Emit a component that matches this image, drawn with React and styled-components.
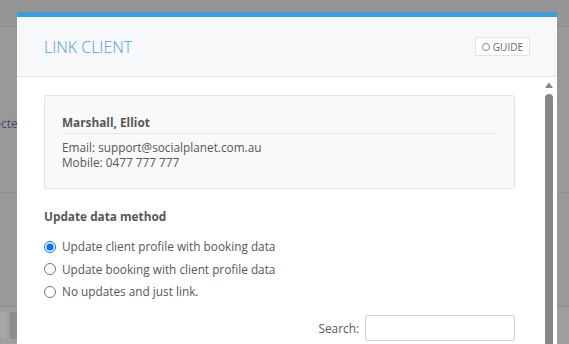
import React from 'react'
import styled, { createGlobalStyle } from 'styled-components'

const GlobalStyle = createGlobalStyle`
  html, body {
    margin: 0;
    height: 100%;
    overflow: hidden;
  }
  body {
    font-family: "Open Sans", "Liberation Sans", sans-serif;
    background: #999999;
  }
`

export default function App() {
  return (
    <>
      <GlobalStyle />
      <Page>
        <TopBar />
        <Band $h={166}>
          <BehindText>Selected</BehindText>
        </Band>
        <Band $h={114} />
        <Footer>
          <FooterBtn $light />
          <FooterBtn />
        </Footer>
      </Page>

      <Modal>
        <Header>
          <Title>LINK CLIENT</Title>
          <GuideButton>
            <Ring />
            GUIDE
          </GuideButton>
        </Header>
        <Body>
          <Content>
            <Card>
              <Name>Marshall, Elliot</Name>
              <Line>Email: support@socialplanet.com.au</Line>
              <Line>Mobile: 0477 777 777</Line>
            </Card>

            <SectionTitle>Update data method</SectionTitle>
            <Options>
              <Option>
                <input type="radio" name="method" defaultChecked />
                Update client profile with booking data
              </Option>
              <Option>
                <input type="radio" name="method" />
                Update booking with client profile data
              </Option>
              <Option>
                <input type="radio" name="method" />
                No updates and just link.
              </Option>
            </Options>

            <SearchRow>
              <label htmlFor="search">Search:</label>
              <SearchInput id="search" type="text" />
            </SearchRow>
          </Content>
          <ScrollCol>
            <svg width="8" height="6" viewBox="0 0 8 6">
              <path d="M0 6 L4 0.5 L8 6 Z" fill="#858585" />
            </svg>
            <Thumb />
          </ScrollCol>
        </Body>
      </Modal>
    </>
  )
}

const Page = styled.div`
  display: flex;
  flex-direction: column;
  height: 344px;
`
const TopBar = styled.div`
  height: 26px;
  background: #959595;
  border-bottom: 1px solid #8c8c8c;
`
const Band = styled.div`
  height: ${({ $h }) => $h}px;
  box-sizing: border-box;
  border-bottom: 1px solid #8f8f8f;
  padding-top: 84px;
`
const BehindText = styled.span`
  display: inline-block;
  margin-left: -22px;
  font-size: 12px;
  line-height: 16px;
  color: #3f4d5c;
`
const Footer = styled.div`
  flex: 1;
  background: #9e9e9e;
  display: flex;
  gap: 3px;
  padding: 5px 0 0;
`
const FooterBtn = styled.div`
  width: 7px;
  height: 27px;
  border-radius: 2px;
  background: ${({ $light }) => ($light ? '#a6a6a6' : '#8c8c8c')};
`

const Modal = styled.div`
  position: absolute;
  left: 17px;
  top: 12px;
  width: 540px;
  height: 420px;
  background: #fff;
  border-top: 5px solid #3a9ddc;
  display: flex;
  flex-direction: column;
`
const Header = styled.div`
  height: 60px;
  box-sizing: border-box;
  background: #f7f8fa;
  border-bottom: 1px solid #e3e4e6;
  padding: 0 27px 0 27px;
  display: flex;
  align-items: center;
  justify-content: space-between;
`
const Title = styled.h3`
  margin: 0;
  font-size: 16px;
  font-weight: 300;
  color: #4aa1e0;
`
const GuideButton = styled.button`
  display: flex;
  align-items: center;
  gap: 3px;
  height: 19px;
  padding: 0 6px 0 6px;
  background: #fff;
  border: 1px solid #e3e3e3;
  border-radius: 2px;
  font-family: inherit;
  font-size: 10px;
  color: #666;
`
const Ring = styled.span`
  width: 6px;
  height: 6px;
  border: 1.6px solid #8a8a8a;
  border-radius: 50%;
`
const Body = styled.div`
  flex: 1;
  display: flex;
`
const Content = styled.div`
  flex: 1;
  padding: 18px 28px 0 27px;
  font-size: 11.8px;
  color: #575757;
`
const Card = styled.div`
  background: #f9f9f9;
  border: 1px solid #e2e2e2;
  border-radius: 3px;
  padding: 19px 17px 18px;
`
const Name = styled.div`
  font-weight: 700;
  line-height: 15px;
  padding-bottom: 3px;
  border-bottom: 1px solid #e6e6e6;
  margin-bottom: 6px;
`
const Line = styled.div`
  line-height: 15px;
`
const SectionTitle = styled.div`
  margin-top: 19px;
  font-weight: 700;
  line-height: 16px;
`
const Options = styled.div`
  margin-top: 14px;
  display: flex;
  flex-direction: column;
  gap: 5.5px;
`
const Option = styled.label`
  display: flex;
  align-items: center;
  gap: 6px;
  line-height: 17px;
  input {
    margin: 0;
    width: 12px;
    height: 12px;
  }
`
const SearchRow = styled.div`
  margin-top: 15px;
  display: flex;
  justify-content: flex-end;
  align-items: center;
  gap: 6px;
`
const SearchInput = styled.input`
  width: 150px;
  height: 26px;
  box-sizing: border-box;
  border: 1px solid #cfcfcf;
  border-radius: 3px;
`
const ScrollCol = styled.div`
  width: 14px;
  padding-top: 5px;
  display: flex;
  flex-direction: column;
  align-items: flex-start;
  gap: 6px;
  svg {
    margin-left: 2px;
  }
`
const Thumb = styled.div`
  margin-left: 2px;
  width: 8px;
  flex: 1;
  background: #878787;
  border-radius: 4px 4px 0 0;
`
